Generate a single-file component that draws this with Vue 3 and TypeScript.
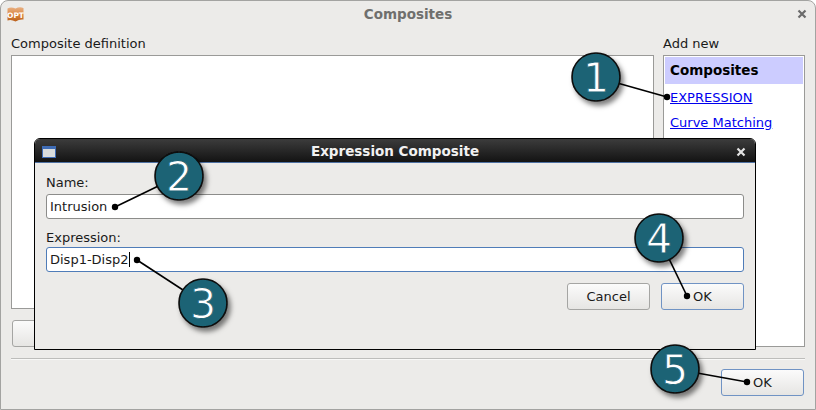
<template>
  <div class="window">
    <header class="titlebar">
      <svg class="opt-icon" width="17" height="15" viewBox="0 0 17 15">
        <defs>
          <linearGradient id="optFill" x1="0" y1="0" x2="0" y2="1">
            <stop offset="0" stop-color="#e8b083" />
            <stop offset="0.55" stop-color="#d9823c" />
            <stop offset="1" stop-color="#b9601c" />
          </linearGradient>
        </defs>
        <path d="M0.5 1.5 Q4 -0.5 8.5 1.5 Q12.5 -0.5 16.5 1 V12.5 Q12.5 12 8.5 14.5 Q4 12 0.5 13.5 Z" fill="url(#optFill)" />
        <text x="8.5" y="10.5" text-anchor="middle" class="opt-text">OPT</text>
      </svg>
      <span class="title">Composites</span>
      <svg class="close" width="10" height="10" viewBox="0 0 10 10">
        <path d="M1.5 1.5 L8.5 8.5 M8.5 1.5 L1.5 8.5" stroke="#6b6b6b" stroke-width="2.2" />
      </svg>
    </header>

    <main class="content">
      <section class="definition">
        <label class="caption">Composite definition</label>
        <div class="definition-box"></div>
        <button class="btn wide"></button>
      </section>
      <aside class="add-new">
        <label class="caption">Add new</label>
        <div class="list">
          <div class="list-head">Composites</div>
          <a class="link first">EXPRESSION</a>
          <a class="link">Curve Matching</a>
        </div>
      </aside>
    </main>

    <hr class="separator" />
    <footer class="footer">
      <button class="btn default">OK</button>
    </footer>

    <div class="dialog">
      <div class="dialog-title">
        <svg class="dialog-icon" width="14" height="12" viewBox="0 0 14 12">
          <rect x="0.5" y="0.5" width="13" height="11" fill="#d9dcdc" stroke="#3f6cb5" />
          <rect x="0" y="0" width="14" height="3" fill="#3f6cb5" />
        </svg>
        <span>Expression Composite</span>
        <svg class="dialog-close" width="10" height="10" viewBox="0 0 10 10">
          <path d="M1.5 1.5 L8.5 8.5 M8.5 1.5 L1.5 8.5" stroke="#e4e4e4" stroke-width="2.2" />
        </svg>
      </div>
      <div class="dialog-body">
        <label class="caption">Name:</label>
        <div class="input">Intrusion</div>
        <label class="caption second">Expression:</label>
        <div class="input focused">Disp1-Disp2<i class="caret"></i></div>
        <div class="dialog-actions">
          <button class="btn">Cancel</button>
          <button class="btn default">OK</button>
        </div>
      </div>
    </div>

    <svg class="callouts" width="816" height="410" viewBox="0 0 816 410">
      <defs>
        <filter id="calloutShadow" x="-30%" y="-30%" width="170%" height="170%">
          <feDropShadow dx="3" dy="4" stdDeviation="2.5" flood-color="#000" flood-opacity="0.5" />
        </filter>
      </defs>
      <g v-for="c in callouts" :key="c.label">
        <line :x1="c.x" :y1="c.y" :x2="c.tx" :y2="c.ty" stroke="#000" stroke-width="1.6" />
        <circle :cx="c.tx" :cy="c.ty" r="3.2" fill="#000" />
        <circle :cx="c.x" :cy="c.y" r="24" fill="#1b6375" stroke="#0a0a0a" stroke-width="1.6" filter="url(#calloutShadow)" />
        <text :x="c.x" :y="c.y + 15" text-anchor="middle" class="callout-num">{{ c.label }}</text>
      </g>
    </svg>
  </div>
</template>

<script setup lang="ts">
interface Callout {
  label: string
  x: number
  y: number
  tx: number
  ty: number
}

const callouts: Callout[] = [
  { label: '1', x: 596, y: 77, tx: 667, ty: 97 },
  { label: '2', x: 179, y: 176, tx: 115, ty: 207 },
  { label: '3', x: 203, y: 303, tx: 137, ty: 260 },
  { label: '4', x: 659, y: 238, tx: 687, ty: 296 },
  { label: '5', x: 675, y: 369, tx: 747, ty: 382 },
]
</script>

<style>
html, body {
  margin: 0;
  background: #fff;
}
</style>

<style scoped>
.window {
  position: relative;
  box-sizing: border-box;
  width: 816px;
  height: 410px;
  display: flex;
  flex-direction: column;
  background: #ecebe9;
  border: 1px solid #a3a3a1;
  border-top-left-radius: 8px;
  border-top-right-radius: 8px;
  overflow: hidden;
  font-family: "DejaVu Sans", sans-serif;
  font-size: 13px;
  color: #1a1a1a;
}

.titlebar {
  position: relative;
  flex: none;
  height: 26px;
  display: flex;
  align-items: center;
  justify-content: center;
}

.opt-icon {
  position: absolute;
  left: 6px;
  top: 6px;
}

.opt-text {
  font-family: "DejaVu Sans", sans-serif;
  font-size: 7.5px;
  font-weight: 700;
  fill: #fff;
}

.title {
  font-weight: 700;
  font-size: 13.5px;
  color: #6f6f6d;
}

.close {
  position: absolute;
  right: 8px;
  top: 8px;
}

.content {
  flex: none;
  display: flex;
  gap: 9px;
  padding: 0 10px;
  height: 320px;
}

.definition {
  width: 643px;
  display: flex;
  flex-direction: column;
}

.caption {
  display: block;
  height: 15px;
  line-height: 15px;
  margin-top: 9px;
  margin-bottom: 4px;
}

.definition-box {
  height: 254px;
  box-sizing: border-box;
  background: #fff;
  border: 1px solid #9a9a98;
}

.btn {
  box-sizing: border-box;
  width: 83px;
  height: 27px;
  padding: 0;
  font: inherit;
  color: #1a1a1a;
  border: 1px solid #a5a5a3;
  border-radius: 3px;
  background: linear-gradient(#fbfbfb, #e6e5e3);
}

.btn.default {
  border-color: #7093c4;
}

.wide {
  width: 200px;
  margin-top: 11px;
  margin-left: 1px;
}

.add-new {
  width: 142px;
  display: flex;
  flex-direction: column;
}

.list {
  box-sizing: border-box;
  height: 293px;
  padding: 1px;
  display: flex;
  flex-direction: column;
  background: #fff;
  border: 1px solid #9a9a98;
}

.list-head {
  height: 27px;
  line-height: 26px;
  padding-left: 5px;
  flex: none;
  font-weight: 700;
  font-size: 13.5px;
  color: #000;
  background: #ccccff;
}

.link {
  padding-left: 5px;
  height: 15px;
  line-height: 15px;
  margin-top: 10px;
  color: #0000ee;
  text-decoration: underline;
}

.link.first {
  margin-top: 6px;
}

.separator {
  flex: none;
  width: 794px;
  margin: 11px 0 0 10px;
  border: none;
  border-top: 1px solid #bdbdbb;
  border-bottom: 1px solid #f8f8f7;
}

.footer {
  flex: none;
  display: flex;
  justify-content: flex-end;
  padding: 9px 11px 0 0;
}

.dialog {
  position: absolute;
  left: 33px;
  top: 137px;
  box-sizing: border-box;
  width: 722px;
  height: 212px;
  background: #ecebe9;
  border: 1px solid #000;
  border-top-left-radius: 6px;
  border-top-right-radius: 6px;
  overflow: hidden;
}

.dialog-title {
  position: relative;
  height: 24px;
  display: flex;
  align-items: center;
  justify-content: center;
  box-sizing: border-box;
  border-bottom: 1px solid #4e71a3;
  background: linear-gradient(#3c3c3c, #131313);
  color: #f1f1f1;
  font-weight: 700;
  font-size: 13.5px;
}

.dialog-icon {
  position: absolute;
  left: 7px;
  top: 7px;
}

.dialog-close {
  position: absolute;
  right: 9px;
  top: 8px;
}

.dialog-body {
  padding: 1px 11px 0 11px;
  display: flex;
  flex-direction: column;
}

.dialog-body .caption {
  margin: 11px 0 4px;
}

.dialog-body .caption.second {
  margin: 11px 0 2px;
}

.input {
  box-sizing: border-box;
  height: 25px;
  line-height: 23px;
  padding-left: 3px;
  background: #fff;
  border: 1px solid #8c8c8a;
  border-radius: 3px;
}

.input.focused {
  border-color: #4f7cb8;
}

.caret {
  display: inline-block;
  width: 1px;
  height: 15px;
  vertical-align: -3px;
  background: #000;
}

.dialog-actions {
  display: flex;
  justify-content: flex-end;
  gap: 11px;
  margin-top: 11px;
}

.callouts {
  position: absolute;
  left: -1px;
  top: -1px;
  pointer-events: none;
}

.callout-num {
  font-family: "DejaVu Sans", sans-serif;
  font-size: 41px;
  fill: #fff;
  stroke: #1b6375;
  stroke-width: 0.8px;
}
</style>
